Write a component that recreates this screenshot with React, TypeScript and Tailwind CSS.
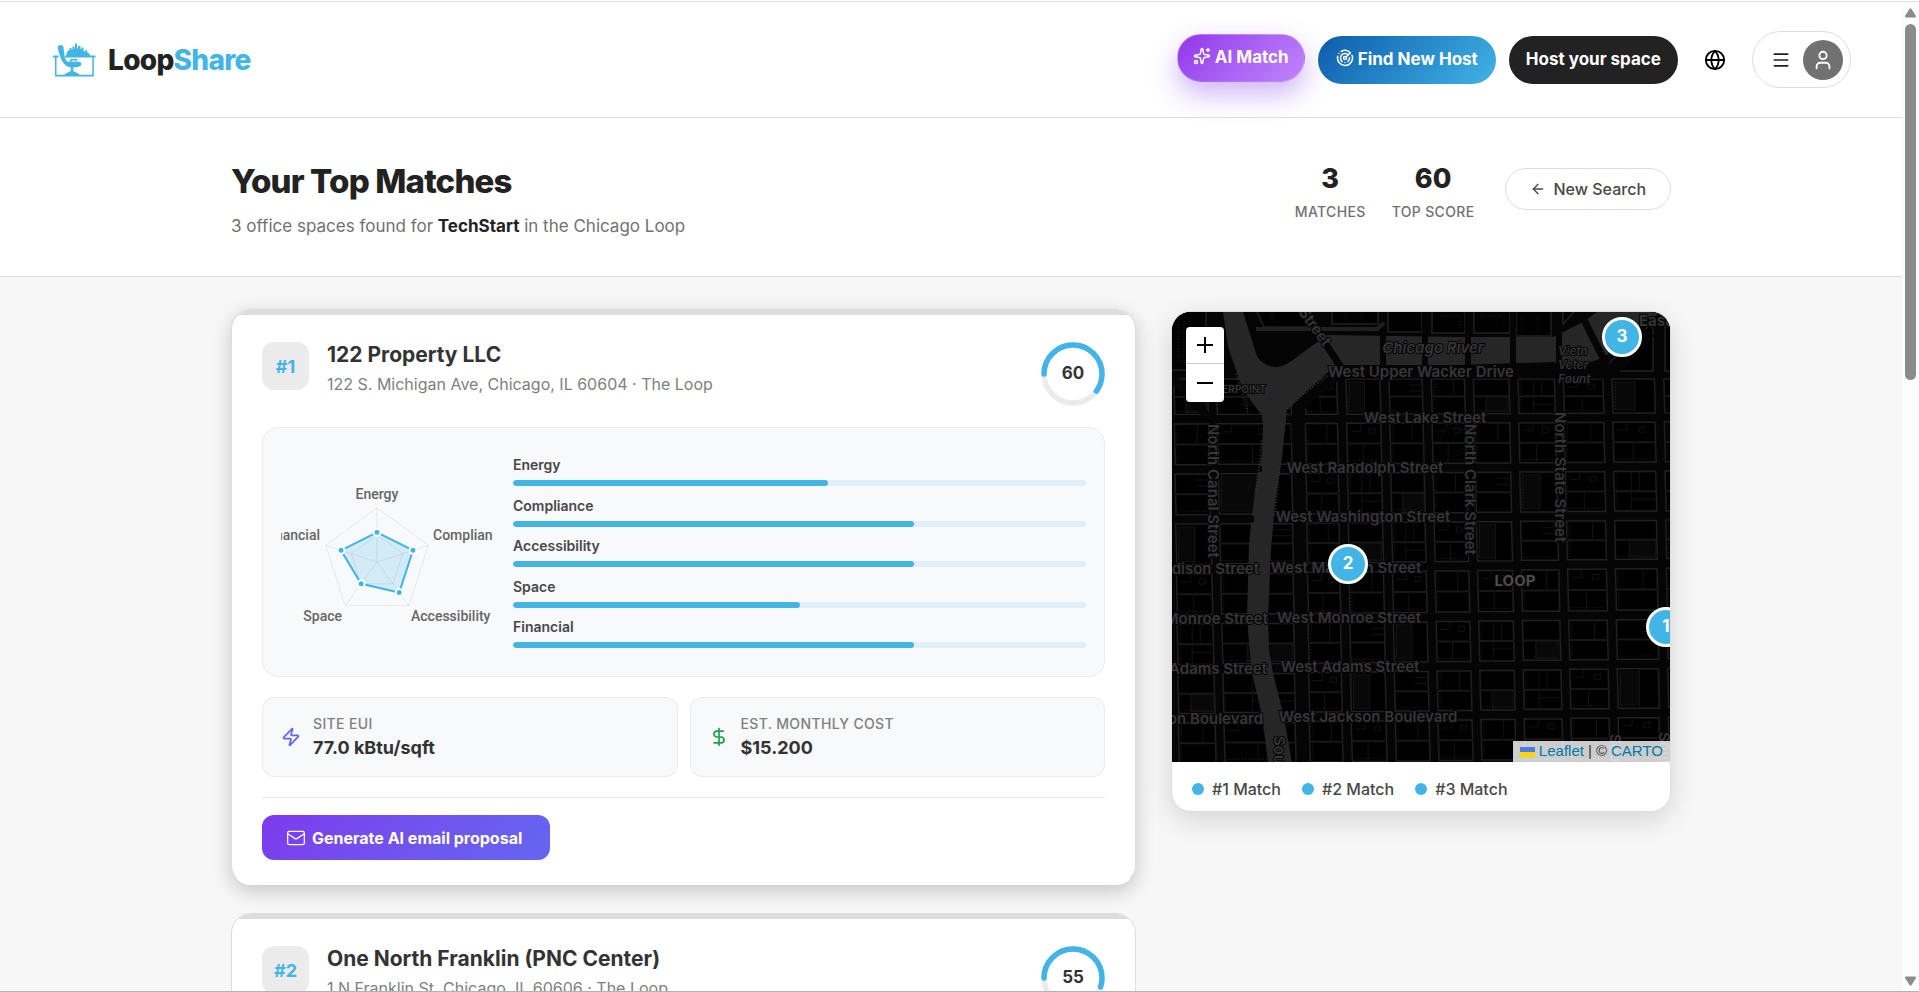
import {
  ArrowLeft,
  DollarSign,
  Globe,
  Mail,
  Menu,
  Radar,
  Sparkles,
  User,
  Zap,
} from "lucide-react";

type Score = { label: string; value: number };

type Match = {
  rank: number;
  name: string;
  address: string;
  score: number;
  active?: boolean;
  scores?: Score[];
  eui?: string;
  cost?: string;
};

const matches: Match[] = [
  {
    rank: 1,
    name: "122 Property LLC",
    address: "122 S. Michigan Ave, Chicago, IL 60604 · The Loop",
    score: 60,
    active: true,
    scores: [
      { label: "Energy", value: 55 },
      { label: "Compliance", value: 70 },
      { label: "Accessibility", value: 70 },
      { label: "Space", value: 50 },
      { label: "Financial", value: 70 },
    ],
    eui: "77.0 kBtu/sqft",
    cost: "$15.200",
  },
  {
    rank: 2,
    name: "One North Franklin (PNC Center)",
    address: "1 N Franklin St, Chicago, IL 60606 · The Loop",
    score: 55,
  },
];

const Logo = () => (
  <svg width="43" height="35" viewBox="0 0 43 35" fill="#42b4e6">
    <path d="M13 14l1-3.500 1-2 1.500-.5V6h2v1.500h1V4.500h2v2h.500V3l1-3 1 3v3.500h1V4h2.500v3h1V5.500h2V9l2 .5V8h1.500v2l2 1.500 1.500 2.500z" />
    <path d="M0 13.500h5.500v2H0zM12 13.500h30.500v2H12z" />
    <path d="M2 15h1.500v17.800h35.800V15h1.500v19.500H2z" />
    <path d="M4.800 5.500C4.500 2.500 10 2 10.500 5.500l1 8.500c.6 3 1.800 5 3.200 5.700L24 19.500c2.500 0 4.500 1 4.500 2.500 0 1.700-2 2.600-5 3.100-3.500.6-8 .3-10-1C10.500 22 8 17.500 6.500 12.500 5.500 9 5 7.500 4.800 5.500z" />
    <path d="M16.500 19.500c0-2 1.500-2.500 4-2.500h4v1.500h-4.500c-1 0-1.500.3-1.500 1.200z" />
    <path d="M17.800 24h2.400v5l6 3v1.500h-14.500V32l6.100-3z" />
  </svg>
);

const Navbar = () => (
  <header className="flex h-[116px] items-center justify-between border-b border-[#dddddd] bg-white pr-[51px] pl-[53px]">
    <a href="#home" className="flex items-center gap-3">
      <Logo />
      <span className="text-[28px] font-extrabold tracking-tight text-[#222222]">
        Loop<span className="text-[#42b4e6]">Share</span>
      </span>
    </a>

    <nav className="flex items-center text-[17px] font-bold text-white">
      <button className="mr-[13px] flex h-12 -translate-y-0.5 items-center gap-1 rounded-full border border-white/20 bg-linear-135 from-[#9333ea] to-[#c084fc] px-[15px] shadow-[0_12px_28px_rgba(124,58,237,0.38)]">
        <Sparkles size={18} className="mb-1" />
        AI Match
      </button>
      <button className="mr-[13px] flex h-12 items-center gap-1 rounded-full bg-linear-135 from-[#0d5cab] to-[#42b4e6] px-[18px]">
        <Radar size={18} className="mb-1" />
        Find New Host
      </button>
      <button className="mr-4 h-12 rounded-full bg-[#222222] px-[17px]">
        Host your space
      </button>
      <button aria-label="Language" className="mr-4 p-2.5 text-black">
        <Globe size={22} />
      </button>
      <button
        aria-label="Account menu"
        className="flex h-[57px] items-center gap-3 rounded-full border border-[#dddddd] pr-[7px] pl-[18px] text-[#222222]"
      >
        <Menu size={20} />
        <span className="flex h-10 w-10 items-center justify-center rounded-full bg-[#717171] text-white">
          <User size={22} />
        </span>
      </button>
    </nav>
  </header>
);

const Stat = ({ value, label }: { value: number; label: string }) => (
  <div className="text-center">
    <div className="text-[27px] leading-8 font-extrabold text-[#222222]">{value}</div>
    <div className="mt-[7px] text-[14px] leading-5 font-medium tracking-wide text-[#717171] uppercase">
      {label}
    </div>
  </div>
);

const PageHeader = () => (
  <section className="border-b border-[#dddddd] bg-white">
    <div className="mx-auto flex h-[158px] max-w-[1440px] items-center justify-between">
      <div className="pt-[7px]">
        <h1 className="text-[33px] leading-10 font-extrabold tracking-tight text-[#222222]">
          Your Top Matches
        </h1>
        <p className="mt-[11px] text-[17px] leading-7 text-[#717171]">
          3 office spaces found for{" "}
          <strong className="font-bold text-[#222222]">TechStart</strong> in the
          Chicago Loop
        </p>
      </div>
      <div className="mb-4 flex items-center">
        <div className="mr-[30px] flex gap-[26px] pt-1.5">
          <Stat value={3} label="Matches" />
          <Stat value={60} label="Top Score" />
        </div>
        <button className="flex h-[42px] items-center gap-2 rounded-full border border-[#dddddd] px-6 text-[16px] font-medium text-[#484848]">
          <ArrowLeft size={16} />
          New Search
        </button>
      </div>
    </div>
  </section>
);

const ScoreRing = ({ score }: { score: number }) => (
  <div className="relative h-16 w-16">
    <svg width="64" height="64" viewBox="0 0 64 64" fill="none" strokeWidth="5.5">
      <circle cx="32" cy="32" r="29" stroke="#ebebeb" />
      <circle
        cx="32"
        cy="32"
        r="29"
        stroke="#42b4e6"
        strokeLinecap="round"
        pathLength="100"
        strokeDasharray={`${score} 100`}
        transform="rotate(180 32 32)"
      />
    </svg>
    <span className="absolute inset-0 flex items-center justify-center text-[17px] font-bold text-[#333333]">
      {score}
    </span>
  </div>
);

const CX = 96;
const CY = 116;
const R = 54;

const point = (i: number, pct: number) => {
  const angle = (Math.PI * 2 * i) / 5 - Math.PI / 2;
  return [
    CX + (Math.cos(angle) * R * pct) / 100,
    CY + (Math.sin(angle) * R * pct) / 100,
  ];
};

const ring = (values: number[]) =>
  values.map((v, i) => point(i, v).join(",")).join(" ");

const RadarChart = ({ scores }: { scores: Score[] }) => (
  <svg width="212" height="212" viewBox="0 0 212 212" className="shrink-0">
    <polygon
      points={ring(scores.map((s) => s.value))}
      fill="#42b4e6"
      fillOpacity="0.2"
    />
    <g fill="none" stroke="#000000" strokeOpacity="0.07">
      <polygon points={ring([100, 100, 100, 100, 100])} />
      <polygon points={ring([50, 50, 50, 50, 50])} />
      {scores.map((s, i) => {
        const [x, y] = point(i, 100);
        return <line key={s.label} x1={CX} y1={CY} x2={x} y2={y} />;
      })}
    </g>
    <polygon
      points={ring(scores.map((s) => s.value))}
      fill="none"
      stroke="#42b4e6"
      strokeWidth="2"
    />
    {scores.map((s, i) => {
      const [x, y] = point(i, s.value);
      return (
        <circle
          key={s.label}
          cx={x}
          cy={y}
          r="3.5"
          fill="#42b4e6"
          stroke="#ffffff"
          strokeWidth="2"
        />
      );
    })}
    <g className="font-['Roboto',sans-serif] text-[14px] font-medium" fill="#666666">
      <text x="96" y="53" textAnchor="middle">Energy</text>
      <text x="152" y="94">Compliance</text>
      <text x="130" y="175">Accessibility</text>
      <text x="61" y="175" textAnchor="end">Space</text>
      <text x="39" y="94" textAnchor="end">Financial</text>
    </g>
  </svg>
);

const MatchCard = ({ match }: { match: Match }) => (
  <article
    className={`overflow-hidden rounded-[20px] border border-[#dddddd] bg-white ${
      match.active ? "-translate-y-0.5 border-b-white shadow-[0_6px_20px_rgba(0,0,0,0.2)]" : ""
    }`}
  >
    <div className="h-[5px] bg-[#dddddd]" />
    <div className="px-[30px] pt-[27px] pb-6">
      <div className="flex items-start justify-between">
        <div className="flex gap-[18px]">
          <div className="flex h-12 w-[47px] items-center justify-center rounded-xl bg-[#ebebeb] text-[18px] font-bold text-[#42b4e6]">
            #{match.rank}
          </div>
          <div>
            <h2 className="text-[21px] leading-[26px] font-bold text-[#333333]">
              {match.name}
            </h2>
            <p className="mt-1 text-[16px] leading-6 text-[#808080]">{match.address}</p>
          </div>
        </div>
        <ScoreRing score={match.score} />
      </div>

      {match.scores && (
        <>
          <div className="mt-[21px] flex h-[250px] items-center gap-5 rounded-2xl border border-[#ebebeb] bg-[#f8f9fb] px-[18px]">
            <RadarChart scores={match.scores} />
            <div className="flex h-48 flex-1 flex-col justify-between">
              {match.scores.map((s) => (
                <div key={s.label}>
                  <div className="text-[14px] leading-[18px] font-semibold text-[#484848]">
                    {s.label}
                  </div>
                  <div className="mt-1.5 h-1.5 overflow-hidden rounded-full bg-[#e1f0f8]">
                    <div
                      className="h-full rounded-full bg-[#42b4e6]"
                      style={{ width: `${s.value}%` }}
                    />
                  </div>
                </div>
              ))}
            </div>
          </div>

          <div className="mt-5 grid grid-cols-2 gap-3">
            <Metric icon={<Zap size={20} color="#6366f1" />} label="Site EUI" value={match.eui} />
            <Metric
              icon={<DollarSign size={20} color="#16a34a" />}
              label="Est. Monthly Cost"
              value={match.cost}
            />
          </div>

          <div className="mt-5 border-t border-[#ebebeb] pt-[17px]">
            <button className="flex h-[45px] items-center gap-1.5 rounded-xl bg-linear-135 from-[#7c3aed] to-[#6366f1] pr-7 pl-6 text-[16px] font-bold text-white">
              <Mail size={20} strokeWidth={1.5} />
              Generate AI email proposal
            </button>
          </div>
        </>
      )}
    </div>
  </article>
);

const Metric = ({
  icon,
  label,
  value,
}: {
  icon: React.ReactNode;
  label: string;
  value?: string;
}) => (
  <div className="flex h-20 items-center gap-3 rounded-xl border border-[#ebebeb] bg-[#f8f9fb] px-[18px]">
    {icon}
    <div>
      <div className="text-[14px] leading-5 font-medium tracking-wide text-[#808080] uppercase">
        {label}
      </div>
      <div className="mt-0.5 text-[18px] leading-6 font-bold text-[#333333]">{value}</div>
    </div>
  </div>
);

/* Street centre lines as [start, end] so the grid keeps its slight tilt */
const avenues = [
  [-4, 2],
  [38, 48],
  [125, 131],
  [168, 175],
  [211, 219],
  [253, 262],
  [295, 305],
  [340, 348],
  [385, 395],
  [434, 442],
  [486, 492],
  [530, 536],
];
const streets = [
  [62, 62],
  [107, 105],
  [157, 154],
  [207, 203],
  [257, 251],
  [307, 302],
  [357, 351],
  [406, 400],
  [456, 450],
];

const cross = (a: number[], s: number[]) => {
  const y = s[0] + ((s[1] - s[0]) * a[0]) / 498;
  const x = a[0] + ((a[1] - a[0]) * y) / 450;
  return [x, y];
};

const Block = ({ col, row }: { col: number; row: number }) => {
  const [x1, y1] = cross(avenues[col], streets[row]);
  const [x2, y2] = cross(avenues[col + 1], streets[row + 1]);
  const left = x1 + (col === 2 ? 7 : 5);
  const right = x2 - (col === 1 ? 7 : 4);
  const top = y1 + 5;
  const bottom = y2 - 4;
  const seed = (col * 7 + row * 5 + ((col * row) % 3) * 2) % 6;
  const midX = left + (right - left) * (0.35 + seed * 0.06);
  const midY = (top + bottom) / 2;

  return (
    <g fill="none" stroke="#131313">
      <path
        d={`M${left} ${top}H${right - 1}L${right} ${bottom}H${left + 1}Z`}
        fill="#000000"
        stroke="#202020"
        strokeWidth="1.5"
      />
      {seed === 0 && (
        <rect x={midX} y={midY} width={right - midX - 2} height={bottom - midY - 2} fill="#080808" />
      )}
      {seed === 3 && (
        <rect x={left + 3} y={top + 3} width={midX - left - 3} height={bottom - top - 6} fill="#080808" />
      )}
      {seed !== 3 && <path d={`M${left} ${midY}H${right}`} strokeWidth="2" stroke="#171717" />}
      <path d={`M${midX} ${seed % 2 ? top : midY}V${seed > 3 ? midY : bottom}`} />
      {seed === 1 && <path d={`M${midX} ${midY + 8}H${right}M${midX + 8} ${top}V${midY}`} />}
      {seed === 2 && (
        <path d={`M${left + 4} ${top + 8}h10v-7M${midX + 6} ${top + 5}h6v5h-6z`} />
      )}
      {seed === 4 && (
        <path d={`M${midX} ${top + 6}H${right}M${midX} ${top + 12}H${right}`} />
      )}
      <path
        d={
          seed % 2
            ? `M${left + 3} ${top + 2}V${bottom - 2}`
            : `M${left + 3} ${bottom - 3}H${right - 3}`
        }
        strokeDasharray="1 2"
        stroke="#222222"
      />
    </g>
  );
};

const river =
  "M51 0L56 35L71 78L88 101L91 111L90 141L83 178L77 231L75 305L77 331L80 361L88 395L91 411L96 450H120L111 401L101 361L97 338L96 305L99 238L103 191L110 145L115 98L128 85L161 56L170 53H288L381 50L401 55L425 48L435 43L465 15L490 0H425L411 10L381 25H288L155 23L118 50Q103 60 90 50Q84 45 83 38L71 0Z";

const streetLabels = [
  { text: "West Lake Street", x: 253, y: 111 },
  { text: "West Randolph Street", x: 193, y: 161 },
  { text: "West Washington Street", x: 191, y: 210 },
  { text: "West Madison Street", x: 174, y: 261 },
  { text: "West Monroe Street", x: 177, y: 311 },
  { text: "West Adams Street", x: 178, y: 360 },
  { text: "West Jackson Boulevard", x: 196, y: 410 },
];

const bankLabels = [
  { text: "Madison Street", x: 87, y: 262 },
  { text: "Monroe Street", x: 96, y: 312 },
  { text: "Adams Street", x: 95, y: 362 },
  { text: "Jackson Boulevard", x: 91, y: 412 },
];

const avenueLabels = [
  { text: "North Canal Street", x: 36, y: 112 },
  { text: "North Clark Street", x: 293, y: 112 },
  { text: "North State Street", x: 383, y: 100 },
  { text: "South", x: 102, y: 424 },
  { text: "South", x: 438, y: 422 },
  { text: "South", x: 487, y: 420 },
];

const MapTiles = () => (
  <svg
    viewBox="0 0 498 450"
    preserveAspectRatio="xMidYMid slice"
    className="h-full w-full"
  >
    <rect width="498" height="450" fill="#050505" />
    {streets.slice(0, -1).map((_, row) =>
      avenues.slice(0, -1).map((_, col) => <Block key={`${row}-${col}`} col={col} row={row} />)
    )}
    <g fill="#000000" stroke="#202020" strokeWidth="1.5">
      <path d="M-2 -2H34V58H-2zM84 -2H125L140 15H92zM160 -2H206V12H160zM216 -2H250V20H216zM260 -2H293V21H260zM302 -2H338V21H302zM344 -2H379V24H344zM391 -2H404L391 12z" />
      <path d="M470 22L481 8V59H438V50zM493 8H500V59H493z" />
    </g>
    <g fill="none" stroke="#222222" strokeDasharray="1 2">
      <path d="M6 6V50M12 6V50M18 6V50M100 0V12M174 0V10M190 0V12M266 4H288V17M308 4H332V17M350 4V20M366 4V20" />
      <circle cx="281" cy="128" r="16" />
      <circle cx="281" cy="128" r="12" />
    </g>
    <path d={river} fill="#262626" />
    {/* Wacker Drive and the bridges */}
    <g fill="none" stroke="#050505">
      <path d="M125 130V106Q126 92 138 85L158 68Q166 61 180 61H430Q445 58 456 44L478 20" strokeWidth="11" />
      <path d="M211 0V62M253 0V62M296 0V62M341 0V62M387 0V62" strokeWidth="6" />
      <path d="M133 0L172 60M408 0L434 52" strokeWidth="7" />
      <path d="M0 106H90M0 157H90M0 207H82M0 257H76M0 307H75M0 357H80M0 406H90" strokeWidth="6" />
      <path d="M0 65L35 104" strokeWidth="8" />
    </g>
    <path d="M84 17H205L212 11" fill="none" stroke="#202020" strokeWidth="4" />
    <path
      d="M116 97Q128 84 158 62M76 100L64 60M84 180L90 128M103 200L108 150"
      fill="none"
      stroke="#333333"
      strokeWidth="2"
      strokeDasharray="1 2"
    />

    <g
      className="text-[15px] font-semibold"
      fill="#363636"
      stroke="#060606"
      strokeWidth="2"
      paintOrder="stroke"
    >
      <text x="249" y="65" textAnchor="middle">West Upper Wacker Drive</text>
      {streetLabels.map((l) => (
        <text key={l.text} x={l.x} y={l.y} textAnchor="middle">
          {l.text}
        </text>
      ))}
      {bankLabels.map((l) => (
        <text key={l.text} x={l.x} y={l.y} textAnchor="end">
          {l.text}
        </text>
      ))}
      {avenueLabels.map((l) => (
        <text key={l.x} transform={`translate(${l.x} ${l.y}) rotate(90)`}>
          {l.text}
        </text>
      ))}
      <text transform="translate(126 0) rotate(54)">Street</text>
      <text x="467" y="14">East</text>
      <g className="italic">
        <text x="261" y="41" textAnchor="middle">Chicago River</text>
        <g className="text-[12px] font-medium">
          <text x="386" y="43">Vietn</text>
          <text x="386" y="57">Veter</text>
          <text x="386" y="71">Fount</text>
        </g>
      </g>
      <text x="94" y="81" textAnchor="end" className="text-[10px]">RIVERPOINT</text>
      <text x="343" y="274" textAnchor="middle" className="font-bold" fill="#4c4c4c">LOOP</text>
    </g>
  </svg>
);

const pins = [
  { rank: 3, left: 450, top: 25 },
  { rank: 2, left: 176, top: 252 },
  { rank: 1, left: 494, top: 315 },
];

const MatchMap = () => (
  <aside className="self-start overflow-hidden rounded-[20px] border border-[#dddddd] bg-white shadow-[0_8px_28px_rgba(0,0,0,0.14)]">
    <div className="relative h-[450px] overflow-hidden bg-black">
      <MapTiles />
      <div className="absolute top-[15px] left-[14px] w-[38px] overflow-hidden rounded-[4px] bg-white text-black">
        <button aria-label="Zoom in" className="flex h-[37px] w-full items-center justify-center border-b border-[#cccccc]">
          <svg width="16" height="16" viewBox="0 0 16 16" stroke="currentColor" strokeWidth="2">
            <path d="M8 0V16M0 8H16" />
          </svg>
        </button>
        <button aria-label="Zoom out" className="flex h-[38px] w-full items-center justify-center">
          <svg width="16" height="16" viewBox="0 0 16 16" stroke="currentColor" strokeWidth="2">
            <path d="M0 8H16" />
          </svg>
        </button>
      </div>
      {pins.map((p) => (
        <button
          key={p.rank}
          className="absolute flex h-10 w-10 -translate-x-1/2 -translate-y-1/2 items-center justify-center rounded-full border-[3px] border-white bg-[#42b4e6] text-[17px] font-bold text-white"
          style={{ left: p.left, top: p.top }}
        >
          {p.rank}
        </button>
      ))}
      <div className="absolute right-0 bottom-0 flex h-[21px] items-center gap-1 bg-white/80 px-[7px] font-['Liberation_Sans',Arial,sans-serif] text-[15px] text-[#333333]">
        <a href="#leaflet" className="flex items-center gap-1 text-[#0078a8]">
          <svg width="15" height="10" viewBox="0 0 15 10">
            <path d="M0 0H15V5H0z" fill="#4c7be1" />
            <path d="M0 5H15V10H0z" fill="#ffd500" />
          </svg>
          Leaflet
        </a>
        <span>| ©</span>
        <a href="#carto" className="text-[#0078a8]">
          CARTO
        </a>
      </div>
    </div>
    <ul className="flex h-[49px] items-center gap-[21px] px-5 pt-1 text-[16px] font-medium text-[#484848]">
      {[1, 2, 3].map((rank) => (
        <li key={rank} className="flex items-center gap-2">
          <span className="h-3 w-3 rounded-full bg-[#42b4e6]" />#{rank} Match
        </li>
      ))}
    </ul>
  </aside>
);

const Scrollbar = () => (
  <div className="flex w-[17px] shrink-0 flex-col items-center bg-[#fcfcfc]">
    <svg width="11" height="22" viewBox="0 0 11 22" fill="#8b8b8b">
      <path d="M4.500 7Q5.500 5.500 6.500 7L11 14Q11 15.500 10 15.500H1Q0 15.500 0 14z" />
    </svg>
    <div className="h-[36%] w-[11px] rounded-full bg-[#8b8b8b]" />
    <svg width="11" height="18" viewBox="0 0 11 18" fill="#8b8b8b" className="mt-auto">
      <path d="M4.500 12Q5.500 13.500 6.500 12L11 5Q11 3.500 10 3.500H1Q0 3.500 0 5z" />
    </svg>
  </div>
);

const App = () => {
  return (
    <div className="flex h-screen flex-col overflow-hidden border-b border-[#b0b4b6] bg-white font-['Inter',sans-serif]">
      <div className="h-0.5 shrink-0 border-b border-[#dfdfe8]" />
      <div className="flex min-h-0 flex-1">
        <div className="flex-1 overflow-hidden bg-[#f7f7f7]">
          <Navbar />
          <PageHeader />
          <main className="mx-auto grid max-w-[1440px] grid-cols-[1fr_500px] gap-[35px] pt-[34px]">
            <div className="flex flex-col gap-[26px]">
              {matches.map((m) => (
                <MatchCard key={m.rank} match={m} />
              ))}
            </div>
            <MatchMap />
          </main>
        </div>
        <Scrollbar />
      </div>
    </div>
  );
};

export default App;
